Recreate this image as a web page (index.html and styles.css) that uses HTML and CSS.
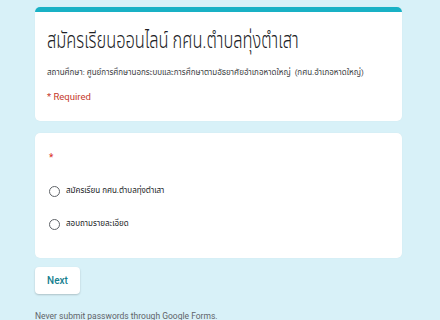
FILE: index.html
```html
<!DOCTYPE html>
<html lang="th">
<head>
<meta charset="utf-8">
<link rel="stylesheet" href="styles.css">
</head>
<body>
<div class="page">
  <div class="card header-card">
    <div class="bar"></div>
    <div class="header-body">
      <h1 class="title"><span class="title-text">สมัครเรียนออนไลน์ กศน.ตำบลทุ่งตำเสา</span></h1>
      <p class="desc">สถานศึกษา: ศูนย์การศึกษานอกระบบและการศึกษาตามอัธยาศัยอำเภอหาดใหญ่ &nbsp;(กศน.อำเภอหาดใหญ่)</p>
      <p class="required">* Required</p>
    </div>
  </div>
  <div class="card question-card">
    <div class="asterisk">*</div>
    <div class="options">
      <label class="option"><span class="radio"></span><span class="opt-text">สมัครเรียน กศน.ตำบลทุ่งตำเสา</span></label>
      <label class="option"><span class="radio"></span><span class="opt-text">สอบถามรายละเอียด</span></label>
    </div>
  </div>
  <button class="next">Next</button>
  <p class="footer">Never submit passwords through Google Forms.</p>
</div>
</body>
</html>
```
FILE: styles.css
```css
html, body {
  margin: 0;
  padding: 0;
  background: #d8f1f8;
  font-family: Roboto, "Noto Sans", "Noto Sans Thai", sans-serif;
  color: #202124;
}
.page {
  width: 367px;
  margin-left: 35px;
  padding-top: 7px;
}
.card {
  background: #fff;
  border-radius: 5px;
  box-shadow: 0 0 1px rgba(0,0,0,0.08);
  overflow: hidden;
}
.bar {
  height: 5px;
  background: #19b1c5;
}
.header-body {
  padding: 13px 13px 17px 12px;
}
.title {
  margin: 0;
  font-size: 22.5px;
  font-weight: 300;
  line-height: 30px;
  color: #202124;
  white-space: nowrap;
}
.title-text {
  display: inline-block;
  transform: scaleX(0.73);
  transform-origin: left center;
}
.desc {
  margin: 11px 0 0;
  font-size: 8px;
  line-height: 14px;
  color: #3c4043;
}
.required {
  margin: 10px 0 0;
  font-size: 9.5px;
  line-height: 14px;
  color: #c5392b;
}
.question-card {
  margin-top: 12px;
  padding: 18px 13px 24px 14px;
}
.asterisk {
  color: #d93025;
  font-size: 10px;
  line-height: 14px;
}
.options {
  margin-top: 16px;
  display: flex;
  flex-direction: column;
  gap: 13px;
}
.option {
  display: flex;
  align-items: center;
  height: 20px;
  gap: 6px;
}
.radio {
  width: 9px;
  height: 9px;
  border: 1.5px solid #5f6368;
  border-radius: 50%;
  flex: none;
}
.opt-text {
  font-size: 8px;
  color: #202124;
}
.next {
  margin-top: 9px;
  width: 45px;
  height: 27px;
  border: none;
  border-radius: 4px;
  background: #fff;
  box-shadow: 0 1px 2px rgba(0,0,0,0.2);
  color: #16808f;
  font-family: Roboto, sans-serif;
  font-weight: 500;
  font-size: 10px;
  padding: 0;
}
.footer {
  margin: 16px 0 0;
  font-size: 8.5px;
  line-height: 12px;
  color: #5f6368;
}
```
